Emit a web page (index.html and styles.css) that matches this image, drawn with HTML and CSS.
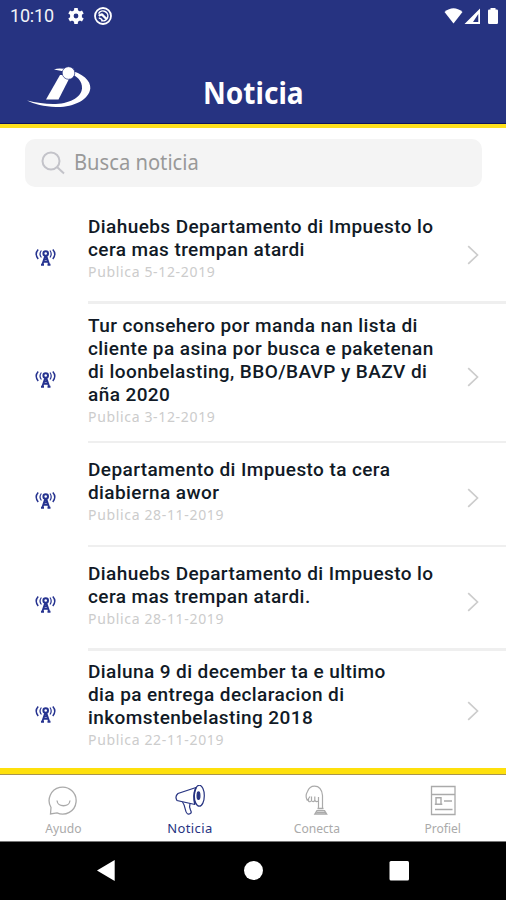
FILE: index.html
```html
<!DOCTYPE html>
<html lang="pap">
<head>
<meta charset="utf-8">
<title>Noticia</title>
<link rel="stylesheet" href="styles.css">
</head>
<body>
<svg class="defs" aria-hidden="true">
  <symbol id="antenna" viewBox="0 0 22 20">
    <g fill="none" stroke="currentColor" stroke-width="1.500">
      <path d="M4.200 2.500Q.2 7 4.200 12M18.800 2.500Q22.800 7 18.800 12"/>
      <path d="M7.400 3.500Q4.600 7 7.400 10.500M16 3.500Q18.400 7 16 10.500" stroke-width="1.200"/>
      <circle cx="11.700" cy="6.500" r="2.300" stroke-width="2"/>
      <path d="M11.200 9L8.200 18M12.300 9L15.300 18M10 12.300h4M9 14.700h5.600M7 17.800h3M13.500 17.800h3" stroke-width="1.900"/>
    </g>
  </symbol>
  <symbol id="chevron" viewBox="0 0 12 20"><path d="M1.200 1.200L10.500 10L1.200 18.800" fill="none" stroke="currentColor" stroke-width="1.700"/></symbol>
</svg>
<div class="app">
  <header class="header">
    <div class="status">
      <span class="time">10:10</span>
      <svg class="gear" viewBox="0 0 16 16"><g fill="#fff"><path fill-rule="evenodd" d="M8 2a6 6 0 1 0 0 12a6 6 0 0 0 0-12zM8 5.600a2.400 2.400 0 1 1 0 4.800a2.400 2.400 0 0 1 0-4.800z"/><path d="M6.300 0h3.400l.5 3.500H5.800zM6.300 16h3.400l.5-3.500H5.800zM.3 5.500l1.700-3L5.200 4l-2 3.400zM15.700 5.500l-1.700-3L10.800 4l2 3.400zM.3 10.500l1.700 3L5.200 12l-2-3.400zM15.700 10.500l-1.700 3L10.800 12l2-3.400z"/></g></svg>
      <svg class="dnd" viewBox="0 0 18 18"><g fill="none" stroke="#fff"><circle cx="9" cy="9" r="8" stroke-width="1.800"/><path d="M4.600 6.700A4.900 4.900 0 1 1 7.200 13.500" stroke-width="1.500"/><path d="M4.800 8.800Q7.500 6.500 9 8.500L12.500 12" stroke-width="2.400"/><path d="M4.800 11q2 .2 3.400 2" stroke-width="1.500"/></g></svg>
      <svg class="signals" viewBox="0 0 56 18"><g fill="#fff"><path d="M.5 5Q9.500-2.500 18.500 5L9.500 16.500z"/><path fill-rule="evenodd" d="M36 1.500V17H20.500zM34.300 7L29 14.900h5.300z"/><path d="M46.500 2.500V1h5v1.500h1.300q1.200 0 1.200 1.200v12.100q0 1.200-1.200 1.200h-7.600q-1.200 0-1.200-1.200V3.700q0-1.200 1.200-1.200z"/></g></svg>
    </div>
    <div class="titlebar">
      <svg class="logo" viewBox="0 0 66 42"><g fill="#fff"><path d="M33 9H44L31.500 33.500H19z"/><path d="M27 3.500Q33 1.500 41 4C56 7 64 15 63.300 22.500C62 34 46 41.500 29 41C17 40.500 7 38 0 34.500C9 36.500 18 38 26 38C42 38 54 32 55 22.500C55.500 15 50 9.500 41 6.500Q33 4.500 27 3.500z"/><circle cx="41.500" cy="7" r="6.300" stroke="#263381" stroke-width=".7"/></g></svg>
      <h1>Noticia</h1>
    </div>
  </header>
  <main>
    <div class="search">
      <svg viewBox="0 0 24 24"><g fill="none" stroke="#c3c3c9" stroke-width="2"><circle cx="10" cy="10" r="8.500"/><path d="M16 16l7 6.500"/></g></svg>
      <span>Busca noticia</span>
    </div>
    <section class="list">
      <article class="row r1"><div class="content"><svg class="ant"><use href="#antenna"/></svg><div class="body"><h2>Diahuebs Departamento di Impuesto lo<br>cera mas trempan atardi</h2><p>Publica 5-12-2019</p></div><svg class="chev"><use href="#chevron"/></svg></div></article>
      <article class="row r2"><div class="content"><svg class="ant"><use href="#antenna"/></svg><div class="body"><h2>Tur consehero por manda nan lista di<br>cliente pa asina por busca e paketenan<br>di loonbelasting, BBO/BAVP y BAZV di<br>aña 2020</h2><p>Publica 3-12-2019</p></div><svg class="chev"><use href="#chevron"/></svg></div></article>
      <article class="row r3"><div class="content"><svg class="ant"><use href="#antenna"/></svg><div class="body"><h2>Departamento di Impuesto ta cera<br>diabierna awor</h2><p>Publica 28-11-2019</p></div><svg class="chev"><use href="#chevron"/></svg></div></article>
      <article class="row r4"><div class="content"><svg class="ant"><use href="#antenna"/></svg><div class="body"><h2>Diahuebs Departamento di Impuesto lo<br>cera mas trempan atardi.</h2><p>Publica 28-11-2019</p></div><svg class="chev"><use href="#chevron"/></svg></div></article>
      <article class="row r5"><div class="content"><svg class="ant"><use href="#antenna"/></svg><div class="body"><h2>Dialuna 9 di december ta e ultimo<br>dia pa entrega declaracion di<br>inkomstenbelasting 2018</h2><p>Publica 22-11-2019</p></div><svg class="chev"><use href="#chevron"/></svg></div></article>
    </section>
  </main>
  <nav class="tabs">
    <div class="tab">
      <svg viewBox="0 0 32 32"><g fill="none" stroke="currentColor" stroke-width="1.300"><path d="M3.500 29L4 22.500A13.500 13.500 0 1 1 10 27.900z"/><path d="M10 15.500C10.500 22.500 22.500 22.500 23 15.500"/></g></svg>
      <span>Ayudo</span>
    </div>
    <div class="tab active">
      <svg viewBox="0 0 32 32"><g fill="none" stroke="currentColor" stroke-width="1.200"><path d="M22 2.500L4 8.500Q.5 11.500 3 15.500L21 19.500"/><path d="M22 2.500Q18.500 11 21 19.500" stroke-width="1.700"/><ellipse cx="25.300" cy="10.700" rx="5" ry="10.500"/><ellipse cx="24.500" cy="10.700" rx="1.400" ry="3.800" fill="currentColor"/><path d="M8.500 17Q10.500 19.500 11.500 25Q12.500 30.500 16.500 28.500Q18 27.500 16.500 25Q15 21.500 16 18.500"/></g></svg>
      <span>Noticia</span>
    </div>
    <div class="tab">
      <svg viewBox="0 0 32 32"><g fill="none" stroke="currentColor" stroke-width="1.200"><path d="M18.500 23.500V12M22.500 23.500V10.500Q21.500 1.200 14.500 1.200Q9.500 1.200 7.500 6.500Q4.800 11 7.300 15.500M7.300 15.500L10 11.500M8.500 14V16Q10 17.700 11.500 15.500V11.500M11.500 15.500Q13 17.700 14.800 15.500V11.500M14.800 15.500Q17 17.700 18.500 15.500"/><path d="M17.500 23.500h6M17 25.700h7.500l2 3.300H15z" stroke-width="1.500"/><path d="M16.500 27.600h9"/></g></svg>
      <span>Conecta</span>
    </div>
    <div class="tab">
      <svg viewBox="0 0 32 32"><g fill="none" stroke="currentColor" stroke-width="1.300"><path d="M4.500 1.500h23.500V29.500H4.500zM4.500 9.500h23.500M17 16h8M8 24.500h17.500"/><path d="M9 12.700h5v6.600H9zM7.800 19.300h7.500" stroke-width="1.400"/></g></svg>
      <span>Profiel</span>
    </div>
  </nav>
  <footer class="android">
    <svg viewBox="0 0 506 58"><g fill="#fff"><path d="M97 28.500L114.700 18v21z"/><circle cx="253.500" cy="28.500" r="9.500"/><rect x="389.500" y="19" width="19.500" height="19.500" rx="1.500"/></g></svg>
  </footer>
</div>
</body>
</html>
```

FILE: styles.css
```css
* { box-sizing: border-box; margin: 0; padding: 0; }
body { background: #fff; font-family: "Noto Sans", sans-serif; }
.defs { display: none; }
.app { width: 506px; height: 900px; overflow: hidden; display: flex; flex-direction: column; }
.header { height: 128px; background: #263381; border-bottom: 4px solid #fee01c; box-shadow: inset 0 -1px #10145c; flex: none; }
.status { height: 32px; display: flex; align-items: center; padding: 0 8px 0 10px; color: #f2f3f8; }
.time { font: 400 18px/32px Roboto, sans-serif; letter-spacing: -.2px; width: 58px; }
.gear { width: 16px; height: 16px; }
.dnd { width: 18px; height: 18px; margin-left: 10px; }
.signals { width: 56px; height: 18px; margin-left: auto; margin-right: -2px; }
.titlebar { display: grid; grid-template-columns: 203px 1fr; height: 92px; }
.logo { width: 66px; height: 42px; margin: 34px 0 0 27px; }
h1 { color: #fff; font: 700 31px/40px "Noto Sans", sans-serif; margin-top: 40px; transform: scaleX(.905); transform-origin: left; white-space: nowrap; }
main { height: 640px; flex: none; padding-top: 11px; }
.search { height: 48px; width: 457px; margin-left: 25px; background: #f4f4f4; border-radius: 10px; display: flex; align-items: center; padding-left: 16px; }
.search svg { width: 24px; height: 24px; }
.search span { font-size: 21px; color: #999; margin: -2px 0 0 9px; transform: scaleX(.96); transform-origin: left; white-space: nowrap; }
.list { padding-top: 20px; }
.row { display: flex; flex-direction: column; }
.row::after { content: ""; height: 2px; background: #efefef; margin: auto 0 0 88px; }
.r1 { height: 97px; padding-top: 8px; }
.r1::after, .r4::after { height: 3px; }
.r2 { height: 139px; padding-top: 10px; }
.r3 { height: 104px; padding-top: 15px; }
.r4 { height: 104px; padding-top: 15px; }
.r5 { height: 117px; padding-top: 9px; }
.r5::after { display: none; }
.content { display: grid; grid-template-columns: 88px 1fr 39px; align-items: center; }
.ant { width: 22px; height: 20px; margin: 15px 0 0 34px; color: #263390; }
.chev { width: 12px; height: 20px; margin-top: 10px; color: #ccc; }
h2 { font: 500 19px/23px Roboto, sans-serif; color: #111a26; letter-spacing: .41px; white-space: nowrap; }
.body p { font-size: 14px; line-height: 22px; margin-bottom: 1px; color: #ccc; letter-spacing: .66px; }
.tabs { height: 74px; flex: none; border-top: 6px solid #fee00c; box-shadow: inset 0 1px #a8944f, inset 0 -1px #777; display: grid; grid-template-columns: repeat(4, 126.600px); }
.tab { display: flex; flex-direction: column; align-items: center; padding-top: 11px; color: #aaa; }
.tab svg { width: 32px; height: 32px; }
.tab span { font-size: 13px; line-height: 18px; margin-top: 2px; transform: scaleX(.93); }
.tab.active { color: #263381; }
.tab.active span { transform: none; letter-spacing: .4px; }
.android { height: 58px; background: #000; flex: none; }
.android svg { width: 506px; height: 58px; display: block; }
```
